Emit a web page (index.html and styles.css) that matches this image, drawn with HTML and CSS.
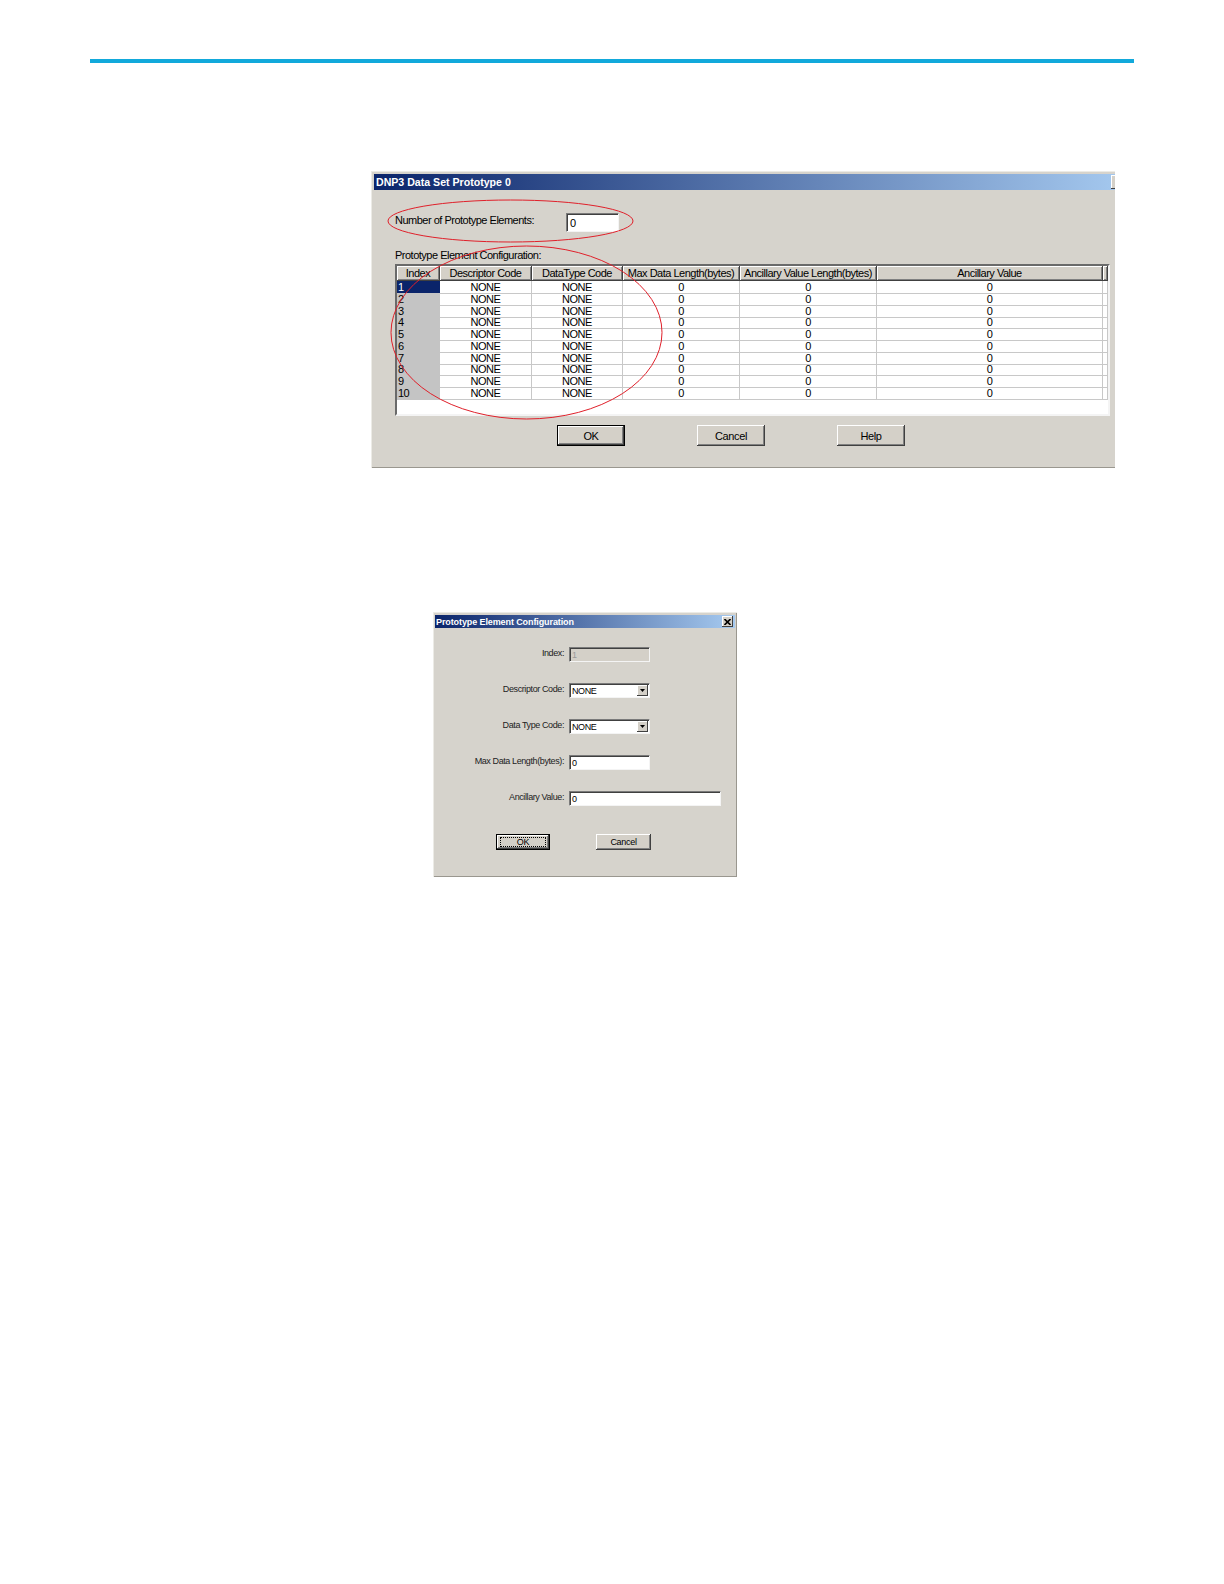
FILE: index.html
```html
<!DOCTYPE html>
<html lang="en">
<head>
    <meta charset="UTF-8">
    <title>DNP3 Data Set Prototype</title>
    <link rel="stylesheet" href="styles.css">
</head>
<body>
    <div class="rule"></div>

    <div class="shot-main">
        <div class="win win-main">
            <div class="titlebar">
                <span class="title">DNP3 Data Set Prototype 0</span>
                <span class="close"><svg width="8" height="7" viewBox="0 0 8 7"><path d="M0 0l8 7M8 0L0 7" /></svg></span>
            </div>
            <div class="win-body">
                <div class="count-row">
                    <label>Number of Prototype Elements:</label>
                    <div class="field count-field">0</div>
                </div>
                <div class="group-label">Prototype Element Configuration:</div>
                <div class="listview">
                    <div class="lv-head">
                        <span>Index</span>
                        <span>Descriptor Code</span>
                        <span>DataType Code</span>
                        <span>Max Data Length(bytes)</span>
                        <span>Ancillary Value Length(bytes)</span>
                        <span>Ancillary Value</span>
                        <span></span>
                    </div>
                    <div id="rows"></div>
                </div>
                <div class="btn-row">
                    <button class="btn default">OK</button>
                    <button class="btn">Cancel</button>
                    <button class="btn">Help</button>
                </div>
            </div>
        </div>
        <!-- red markup drawn over the screenshot -->
        <svg class="marks" width="744" height="297" viewBox="0 0 744 297">
            <ellipse cx="139.5" cy="50" rx="122.5" ry="21" />
            <ellipse cx="155.5" cy="161.5" rx="135.5" ry="86.5" />
        </svg>
    </div>

    <div class="win win-small">
        <div class="titlebar">
            <span class="title">Prototype Element Configuration</span>
            <span class="close"><svg width="7" height="6" viewBox="0 0 7 6"><path d="M0.5 0l6 6M6.5 0l-6 6" /></svg></span>
        </div>
        <div class="form">
            <label>Index:</label>
            <div class="field f-index">1</div>

            <label>Descriptor Code:</label>
            <div class="field f-select">NONE<span class="drop"><svg width="5" height="3" viewBox="0 0 5 3"><path d="M0 0h5L2.5 3z" /></svg></span></div>

            <label>Data Type Code:</label>
            <div class="field f-select">NONE<span class="drop"><svg width="5" height="3" viewBox="0 0 5 3"><path d="M0 0h5L2.5 3z" /></svg></span></div>

            <label>Max Data Length(bytes):</label>
            <div class="field f-max">0</div>

            <label>Ancillary Value:</label>
            <div class="field f-anc">0</div>
        </div>
        <div class="btn-row-small">
            <button class="btn btn-small default"><span class="focus">OK</span></button>
            <button class="btn btn-small">Cancel</button>
        </div>
    </div>

    <script>
        const rows = document.getElementById('rows');
        for (let i = 1; i <= 10; i++) {
            const row = document.createElement('div');
            row.className = 'lv-row';
            row.innerHTML =
                `<span class="idx${i === 1 ? ' sel' : ''}">${i}</span>` +
                '<span>NONE</span><span>NONE</span><span>0</span><span>0</span><span>0</span><span></span>';
            rows.appendChild(row);
        }
    </script>
</body>
</html>
```

FILE: styles.css
```css
* {
    box-sizing: border-box;
}

body {
    margin: 0;
    background: #fff;
    color: #000;
    font-family: 'Liberation Sans', Arial, sans-serif;
}

.rule {
    margin: 59px 0 0 90px;
    width: 1044px;
    height: 4px;
    background: #12a9db;
}

/* ---- windows ---- */

.win {
    background: #d6d3cc;
    padding: 3px;
    box-shadow: inset 1px 1px #ecebe6, inset -1px -1px #9a978f;
}

.titlebar {
    display: flex;
    align-items: center;
    justify-content: space-between;
    height: 16px;
    padding: 0 2px;
    background: linear-gradient(to right, #0a246a, #a6caf0);
}

.title {
    color: #fff;
    font: bold 10.6px 'Liberation Sans', sans-serif;
    white-space: nowrap;
}

.close {
    display: flex;
    align-items: center;
    justify-content: center;
    width: 16px;
    height: 14px;
    background: #d4d0c8;
    box-shadow: inset -1px -1px #404040, inset 1px 1px #fff;
}

.close path {
    stroke: #000;
    stroke-width: 1.6;
    fill: none;
}

.field {
    display: flex;
    align-items: center;
    background: #fff;
    border: 1px solid;
    border-color: #7a7a7a #f4f4f4 #f4f4f4 #7a7a7a;
    box-shadow: inset 1px 1px #404040;
    padding: 0 3px;
    font-size: 11px;
    letter-spacing: -0.5px;
}

.btn {
    padding: 0;
    border: none;
    background: #d4d0c8;
    box-shadow: inset -1px -1px #404040, inset 1px 1px #fff, inset -2px -2px #808080;
    font-family: inherit;
    font-size: 11px;
    letter-spacing: -0.4px;
    color: #000;
}

.btn.default {
    border: 1px solid #000;
}

/* ---- main dialog ---- */

.shot-main {
    position: relative;
    margin: 108px 0 0 371px;
    width: 744px;
    height: 297px;
    overflow: hidden;
}

.win-main {
    width: 761px;
    height: 297px;
}

.win-body {
    padding-left: 21px;
    font-size: 11px;
    letter-spacing: -0.5px;
}

.count-row {
    display: flex;
    align-items: center;
    margin-top: 23px;
}

.count-row label {
    width: 171px;
    padding-bottom: 6px;
}

.count-field {
    width: 53px;
    height: 19px;
}

.group-label {
    margin-top: 17px;
    line-height: 12px;
}

.listview {
    margin-top: 3px;
    width: 715px;
    height: 152px;
    background: #fff;
    border: 2px solid;
    border-color: #6a6a6a #f4f4f4 #f4f4f4 #6a6a6a;
    overflow: hidden;
}

.lv-head,
.lv-row {
    display: grid;
    grid-template-columns: 43px 92px 91px 117px 137px 226px 5px;
}

.lv-head {
    height: 15px;
}

.lv-head span {
    background: #d4d0c8;
    box-shadow: inset 1px 1px #fff, inset -1px -1px #808080;
    border-right: 1px solid #404040;
    border-bottom: 1px solid #404040;
    line-height: 14px;
    text-align: center;
    white-space: nowrap;
    overflow: hidden;
}

.lv-row {
    height: 11.78px;
}

.lv-row span {
    border-right: 1px solid #c8c8c8;
    border-bottom: 1px solid #c8c8c8;
    line-height: 12px;
    text-align: center;
    white-space: nowrap;
}

.lv-row .idx {
    background: #c4c4c4;
    border-color: #c4c4c4;
    text-align: left;
    padding-left: 1px;
}

.lv-row .idx.sel {
    background: #0a246a;
    border-color: #0a246a;
    color: #fff;
}

.btn-row {
    display: flex;
    gap: 72px;
    margin: 9px 0 0 162px;
}

.btn-row .btn {
    width: 68px;
    height: 21px;
}

.marks {
    position: absolute;
    top: 0;
    left: 0;
    pointer-events: none;
}

.marks ellipse {
    fill: none;
    stroke: #e0202a;
    stroke-width: 1;
}

/* ---- element dialog ---- */

.win-small {
    margin: 144px 0 0 433px;
    width: 304px;
    height: 265px;
    padding: 3px 2px 2px;
}

.win-small .titlebar {
    height: 13px;
    padding: 0 2px 0 1px;
}

.win-small .title {
    font-size: 9px;
    letter-spacing: -0.1px;
}

.win-small .close {
    width: 11px;
    height: 11px;
}

.form {
    display: grid;
    grid-template-columns: 129px auto;
    column-gap: 5px;
    row-gap: 21px;
    align-items: center;
    justify-items: start;
    margin-top: 19px;
    font-size: 9px;
    letter-spacing: -0.4px;
}

.form label {
    justify-self: end;
    padding-bottom: 4px;
    color: #222;
}

.form .field {
    height: 15px;
    font-size: 9px;
    letter-spacing: -0.4px;
    padding: 0 2px;
}

.f-index {
    width: 81px;
    background: #d4d0c8;
    color: #9a9a9a;
}

.f-select {
    width: 81px;
    justify-content: space-between;
    padding-right: 1px !important;
}

.drop {
    display: flex;
    align-items: center;
    justify-content: center;
    width: 11px;
    height: 11px;
    background: #d4d0c8;
    box-shadow: inset -1px -1px #404040, inset 1px 1px #fff;
}

.f-max {
    width: 81px;
}

.f-anc {
    width: 152px;
}

.btn-row-small {
    display: flex;
    gap: 46px;
    margin: 28px 0 0 61px;
}

.btn-small {
    width: 55px;
    height: 16px;
    font-size: 9px;
    letter-spacing: -0.3px;
}

.btn-small.default {
    width: 54px;
}

.focus {
    display: block;
    margin: 2px 3px;
    border: 1px dotted #000;
    line-height: 8px;
}
```
